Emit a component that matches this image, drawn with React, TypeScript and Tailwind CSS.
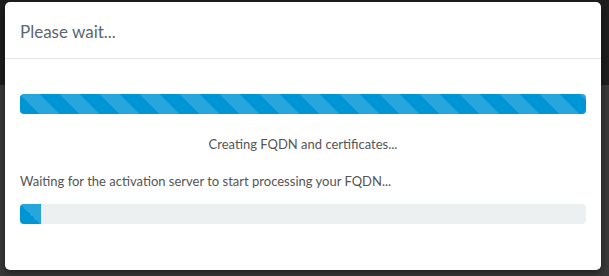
const stripes =
  "linear-gradient(45deg, rgba(255,255,255,.15) 25%, transparent 25%, transparent 50%, rgba(255,255,255,.15) 50%, rgba(255,255,255,.15) 75%, transparent 75%, transparent)";

export default function App() {
  return (
    <div className="relative h-[276px] w-[609px] overflow-hidden bg-[#3a3a3a] font-['Lato',sans-serif]">
      <div className="h-[85px] bg-[#1e1e1e]" />
      <div className="absolute left-[5px] top-[2px] flex h-[268px] w-[596px] flex-col rounded-[5px] bg-white shadow-[0_3px_9px_rgba(0,0,0,0.5)]">
        <div className="flex h-[57px] items-center border-b border-[#e5e5e5] px-[15px] pt-[3px]">
          <h4 className="text-[17px] text-[#5b6670]">Please wait...</h4>
        </div>
        <div className="px-[15px] pt-[35px]">
          <div
            className="h-[20px] rounded-[4px] bg-[#0096d6]"
            style={{ backgroundImage: stripes, backgroundSize: "40px 40px" }}
          />
          <p className="mt-[20px] text-center text-[13px] leading-[20px] text-[#555]">
            Creating FQDN and certificates...
          </p>
          <p className="mt-[17px] text-[13px] leading-[20px] text-[#555]">
            Waiting for the activation server to start processing your FQDN...
          </p>
          <div className="mt-[13px] h-[20px] overflow-hidden rounded-[4px] bg-[#ecf0f1]">
            <div
              className="h-full w-[21px] bg-[#0096d6]"
              style={{ backgroundImage: stripes, backgroundSize: "40px 40px" }}
            />
          </div>
        </div>
      </div>
    </div>
  );
}
